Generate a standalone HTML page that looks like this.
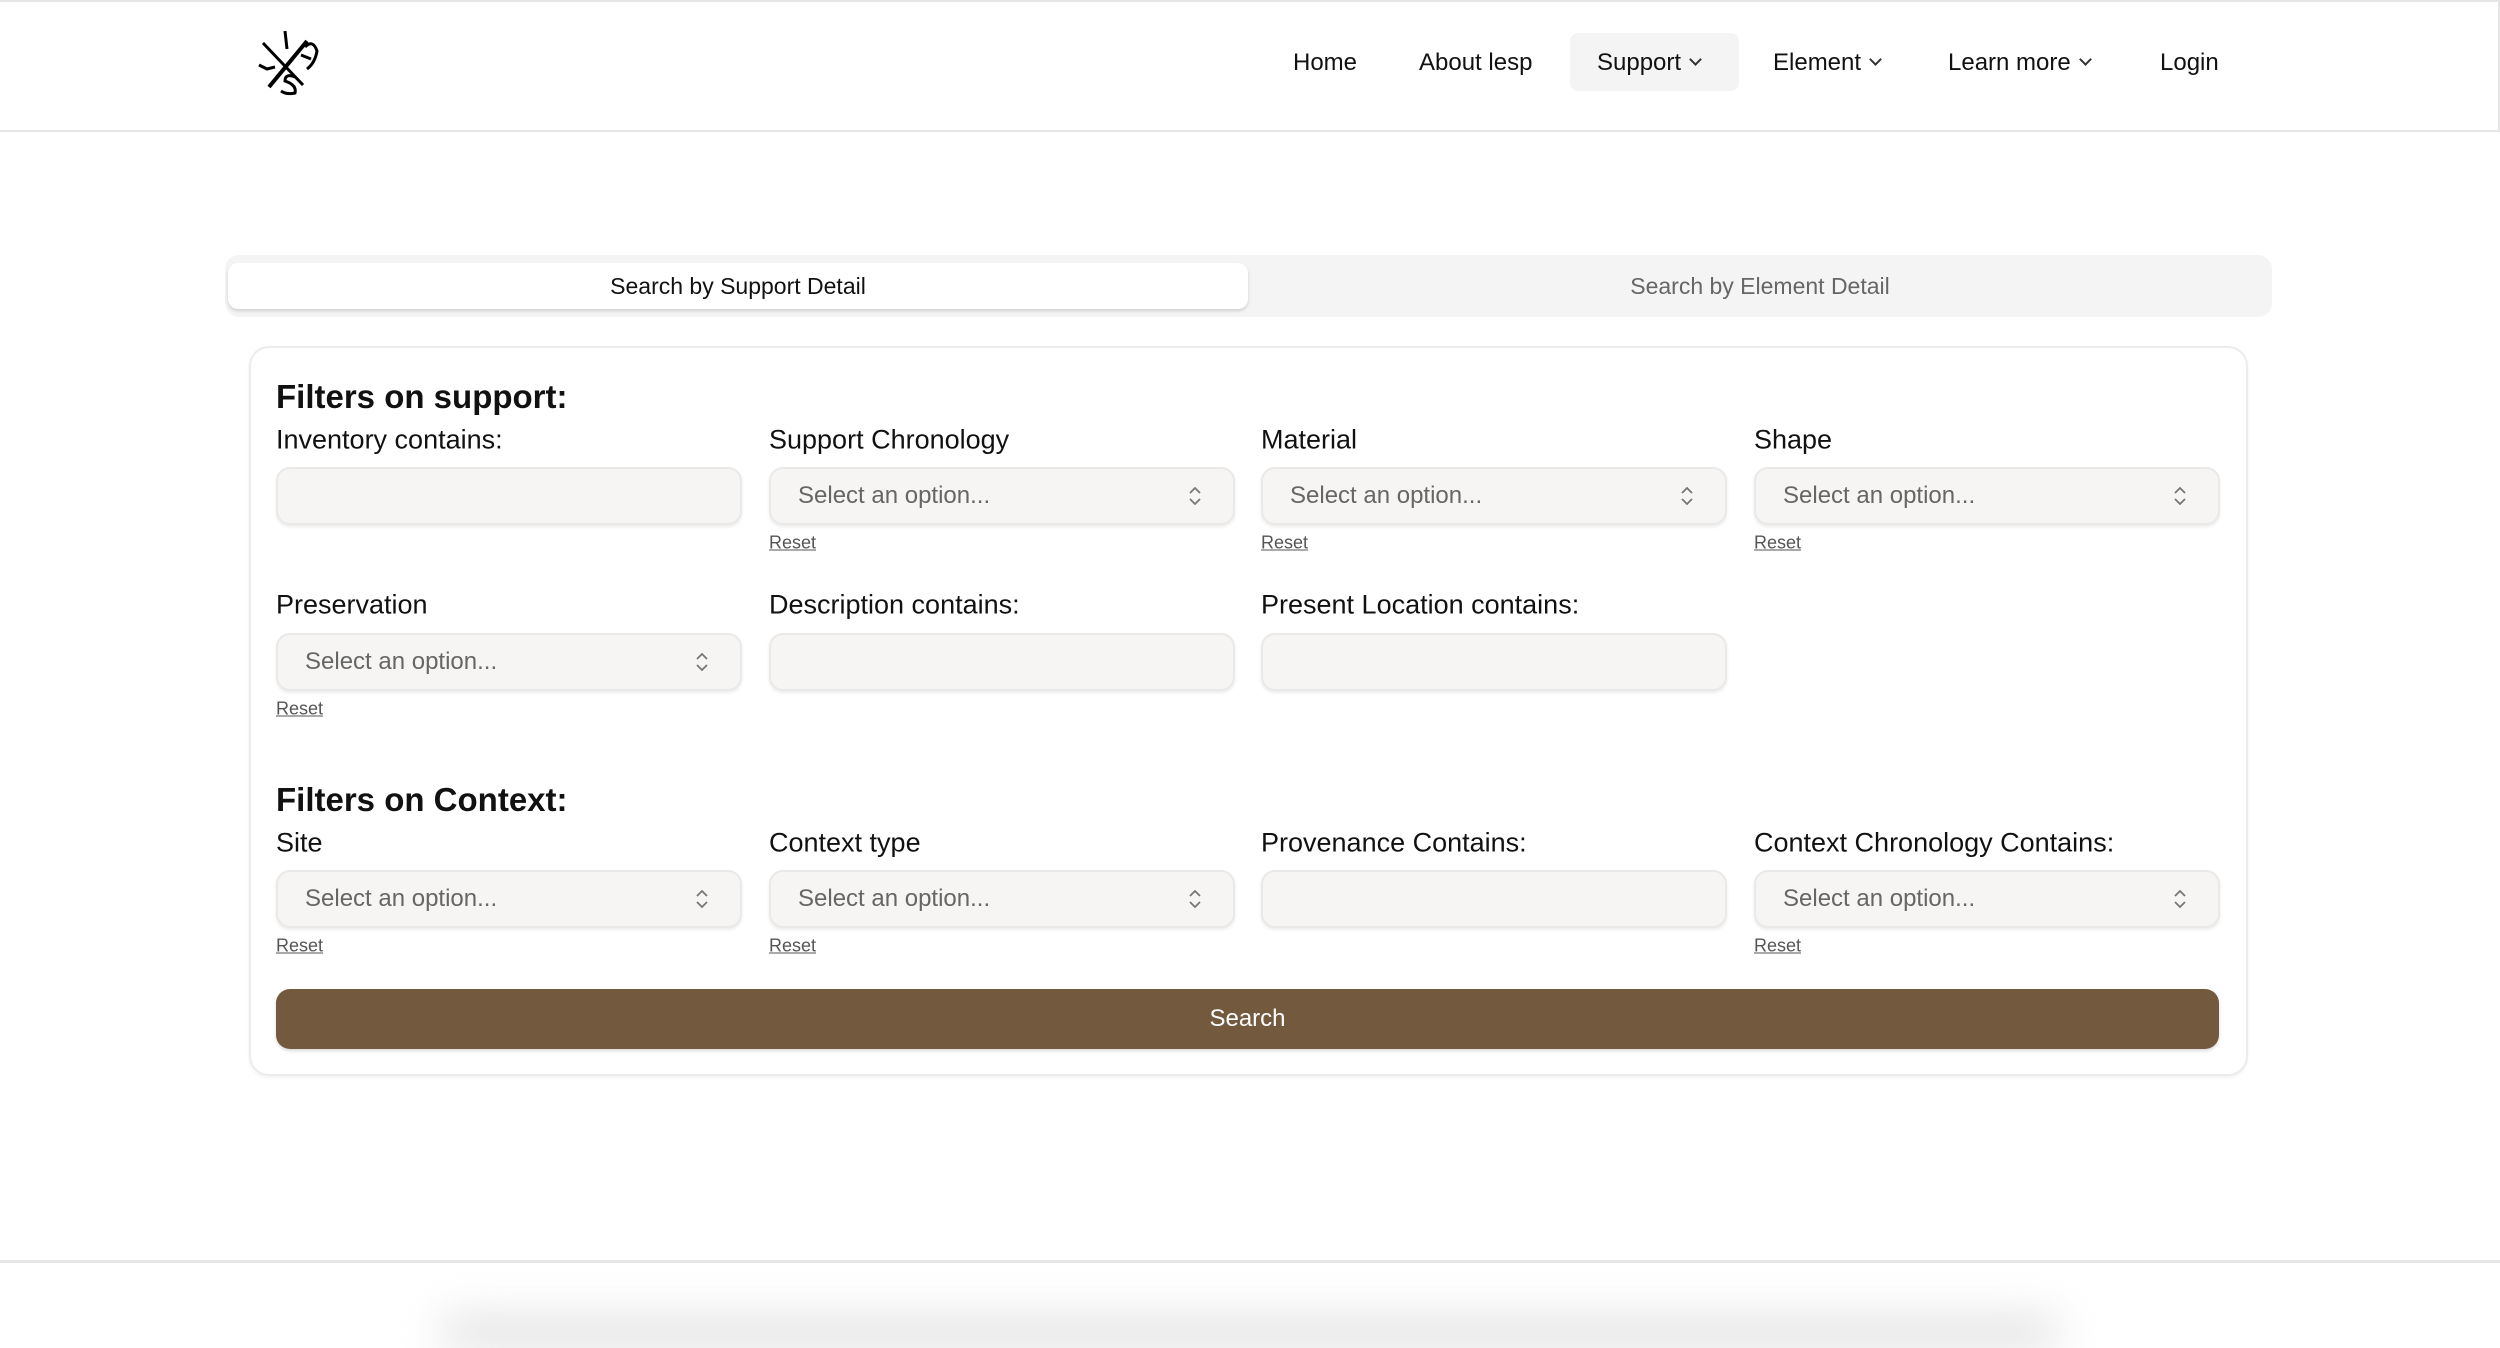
<!DOCTYPE html>
<html><head><meta charset="utf-8"><style>
*{box-sizing:border-box;margin:0;padding:0}
body{width:2500px;height:1322px;overflow:hidden;background:#fff;font-family:"Liberation Sans",sans-serif;color:#111;position:relative}
.hdr{position:absolute;left:0;top:0;width:2500px;height:132px;border-top:2px solid #e6e6e6;border-bottom:2px solid #e6e6e6;border-right:2px solid #e6e6e6}
.nav{position:absolute;top:63px;font-size:24px;transform:translateY(-50%);white-space:nowrap}
.chev{display:inline-block;width:9px;height:9px;border-right:2px solid #333;border-bottom:2px solid #333;transform:rotate(45deg);margin-left:10px;position:relative;top:-6px}
.supbg{position:absolute;left:1570px;top:33px;width:169px;height:58px;background:#f4f4f4;border-radius:8px}
.tabs{position:absolute;left:225px;top:255px;width:2047px;height:62px;background:#f4f4f4;border-radius:14px}
.tab1{position:absolute;left:228px;top:263px;width:1020px;height:46px;background:#fff;border-radius:10px;box-shadow:0 2px 3px rgba(0,0,0,.15);font-size:23px;text-align:center;line-height:46px}
.tab2{position:absolute;left:1250px;top:263px;width:1020px;height:46px;font-size:23px;text-align:center;line-height:46px;color:#666}
.card{position:absolute;left:249px;top:346px;width:1999px;height:730px;border:2px solid #ececec;border-radius:20px;box-shadow:0 2px 3px rgba(0,0,0,.05)}
.h{position:absolute;left:276px;font-size:33px;font-weight:bold;transform:translateY(-50%)}
.lbl{position:absolute;font-size:27px;transform:translateY(-50%);white-space:nowrap}
.inp{position:absolute;width:466px;height:58px;background:#f6f5f4;border:2px solid #ebe9e7;border-radius:14px;box-shadow:0 2px 3px rgba(0,0,0,.08);font-size:24px;color:#666;line-height:54px;padding-left:27px}
.inp svg{position:absolute;right:31px;top:16px}
.rst{position:absolute;font-size:18px;color:#555;text-decoration:underline;transform:translateY(-50%)}
.btn{position:absolute;left:276px;top:989px;width:1943px;height:60px;background:#735a3e;border-radius:14px;color:#fff;font-size:24px;text-align:center;line-height:60px;box-shadow:0 2px 3px rgba(0,0,0,.15)}
.foot{position:absolute;left:0;top:1260px;width:2500px;height:3px;background:#e6e6e6}
.fsh{position:absolute;left:440px;top:1318px;width:1620px;height:30px;background:#ddd;filter:blur(22px);border-radius:40px}
</style></head><body>
<div class="hdr"></div>
<svg style="position:absolute;left:255px;top:29px" width="68" height="68" viewBox="0 0 68 68" fill="none" stroke="#000" stroke-width="3">
<path d="M30 2 L32 20"/><path d="M8 14 L48 56"/><path d="M52 12 L14 58" stroke-width="4"/><path d="M4 36 L12 40 L20 38"/><path d="M50 18 Q58 10 62 22 Q60 34 52 40"/><path d="M40 48 Q30 44 30 52 Q42 56 40 64 Q32 66 26 62"/><path d="M46 26 L56 30"/>
</svg>
<div class="supbg"></div>
<div class="nav" style="left:1293px">Home</div>
<div class="nav" style="left:1419px">About lesp</div>
<div class="nav" style="left:1597px">Support<span class="chev"></span></div>
<div class="nav" style="left:1773px">Element<span class="chev"></span></div>
<div class="nav" style="left:1948px">Learn more<span class="chev"></span></div>
<div class="nav" style="left:2160px">Login</div>
<div class="tabs"></div>
<div class="tab1">Search by Support Detail</div>
<div class="tab2">Search by Element Detail</div>
<div class="card"></div>
<div class="h" style="top:397px">Filters on support:</div>
<div class="lbl" style="left:276px;top:440px">Inventory contains:</div>
<div class="lbl" style="left:769px;top:440px">Support Chronology</div>
<div class="lbl" style="left:1261px;top:440px">Material</div>
<div class="lbl" style="left:1754px;top:440px">Shape</div>
<div class="inp" style="left:276px;top:467px"></div>
<div class="inp" style="left:769px;top:467px">Select an option...<svg width="14" height="22" viewBox="0 0 14 22" fill="none" stroke="#777" stroke-width="1.8"><path d="M2 8 L7 3 L12 8 M2 14 L7 19 L12 14"/></svg></div>
<div class="inp" style="left:1261px;top:467px">Select an option...<svg width="14" height="22" viewBox="0 0 14 22" fill="none" stroke="#777" stroke-width="1.8"><path d="M2 8 L7 3 L12 8 M2 14 L7 19 L12 14"/></svg></div>
<div class="inp" style="left:1754px;top:467px">Select an option...<svg width="14" height="22" viewBox="0 0 14 22" fill="none" stroke="#777" stroke-width="1.8"><path d="M2 8 L7 3 L12 8 M2 14 L7 19 L12 14"/></svg></div>
<div class="rst" style="left:769px;top:543px">Reset</div>
<div class="rst" style="left:1261px;top:543px">Reset</div>
<div class="rst" style="left:1754px;top:543px">Reset</div>
<div class="lbl" style="left:276px;top:605px">Preservation</div>
<div class="lbl" style="left:769px;top:605px">Description contains:</div>
<div class="lbl" style="left:1261px;top:605px">Present Location contains:</div>
<div class="inp" style="left:276px;top:633px">Select an option...<svg width="14" height="22" viewBox="0 0 14 22" fill="none" stroke="#777" stroke-width="1.8"><path d="M2 8 L7 3 L12 8 M2 14 L7 19 L12 14"/></svg></div>
<div class="inp" style="left:769px;top:633px"></div>
<div class="inp" style="left:1261px;top:633px"></div>
<div class="rst" style="left:276px;top:709px">Reset</div>
<div class="h" style="top:800px">Filters on Context:</div>
<div class="lbl" style="left:276px;top:843px">Site</div>
<div class="lbl" style="left:769px;top:843px">Context type</div>
<div class="lbl" style="left:1261px;top:843px">Provenance Contains:</div>
<div class="lbl" style="left:1754px;top:843px">Context Chronology Contains:</div>
<div class="inp" style="left:276px;top:870px">Select an option...<svg width="14" height="22" viewBox="0 0 14 22" fill="none" stroke="#777" stroke-width="1.8"><path d="M2 8 L7 3 L12 8 M2 14 L7 19 L12 14"/></svg></div>
<div class="inp" style="left:769px;top:870px">Select an option...<svg width="14" height="22" viewBox="0 0 14 22" fill="none" stroke="#777" stroke-width="1.8"><path d="M2 8 L7 3 L12 8 M2 14 L7 19 L12 14"/></svg></div>
<div class="inp" style="left:1261px;top:870px"></div>
<div class="inp" style="left:1754px;top:870px">Select an option...<svg width="14" height="22" viewBox="0 0 14 22" fill="none" stroke="#777" stroke-width="1.8"><path d="M2 8 L7 3 L12 8 M2 14 L7 19 L12 14"/></svg></div>
<div class="rst" style="left:276px;top:946px">Reset</div>
<div class="rst" style="left:769px;top:946px">Reset</div>
<div class="rst" style="left:1754px;top:946px">Reset</div>
<div class="btn">Search</div>
<div class="foot"></div>
<div class="fsh"></div>
</body></html>
